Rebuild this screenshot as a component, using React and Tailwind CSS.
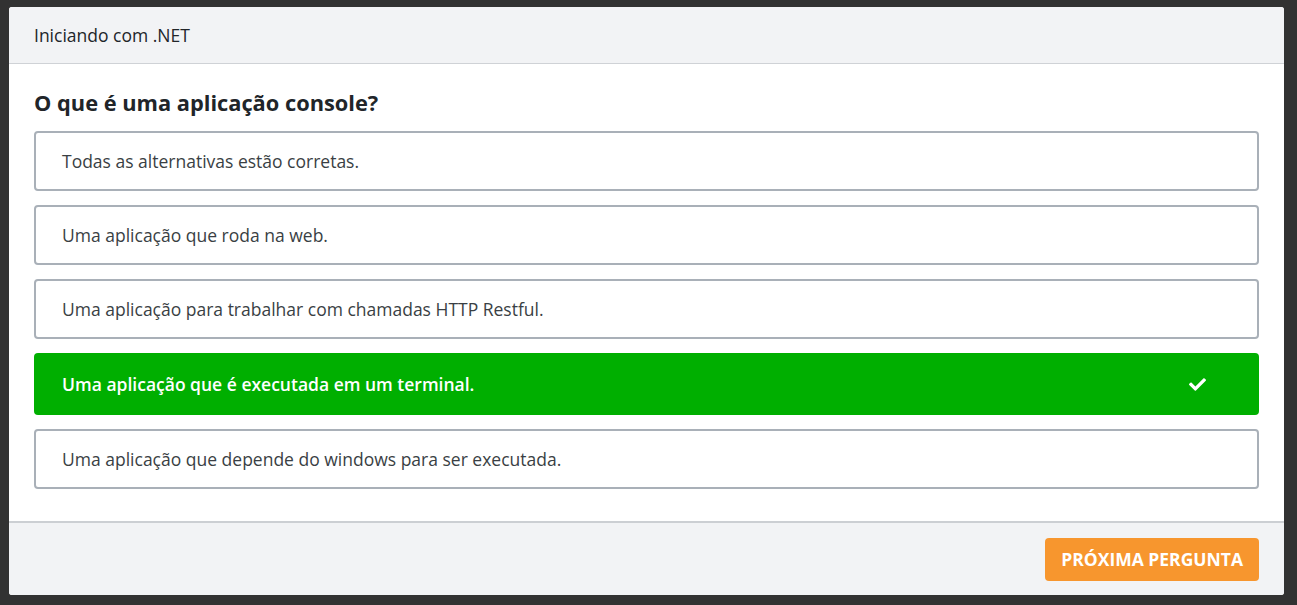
import { FaCheck } from 'react-icons/fa'

const options = [
  { text: 'Todas as alternativas estão corretas.' },
  { text: 'Uma aplicação que roda na web.' },
  { text: 'Uma aplicação para trabalhar com chamadas HTTP Restful.' },
  { text: 'Uma aplicação que é executada em um terminal.', correct: true },
  { text: 'Uma aplicação que depende do windows para ser executada.' },
]

export default function App() {
  return (
    <div className="min-h-[605px] bg-[#323232] pt-[7px] pl-[9px] pr-[13px] pb-[10px] font-['Open_Sans',sans-serif]">
      <div className="flex h-[588px] flex-col overflow-hidden rounded-[3px] bg-white">
        <div className="flex h-[57px] items-center border-b border-[#cfd2d6] bg-[#f2f3f5] px-[25px] text-[17.5px] text-[#212529]">
          Iniciando com .NET
        </div>

        <div className="flex-1 px-[25px] pt-[22px]">
          <h2 className="text-[21.8px] font-bold leading-[34px] text-[#212529]">O que é uma aplicação console?</h2>
          <div className="mt-[11px] flex flex-col gap-[14px]">
            {options.map((option) =>
              option.correct ? (
                <div
                  className="flex h-[62px] items-center justify-between rounded-[4px] bg-[#00af00] pl-[28px] pr-[53px] text-[17.5px] font-semibold text-white"
                  key={option.text}
                >
                  <span>{option.text}</span>
                  <FaCheck className="h-[17px] w-[17px]" />
                </div>
              ) : (
                <div
                  className="flex h-[60px] items-center rounded-[4px] border-2 border-[#a9b0b8] pl-[26px] text-[17.5px] text-[#3a3f44]"
                  key={option.text}
                >
                  {option.text}
                </div>
              ),
            )}
          </div>
        </div>

        <div className="flex h-[74px] items-center justify-end border-t-2 border-[#cccfd3] bg-[#f2f3f5] px-[25px]">
          <button
            className="h-[43px] rounded-[4px] bg-[#f7962e] px-[16px] text-[17.5px] font-bold uppercase text-white"
            type="button"
          >
            Próxima Pergunta
          </button>
        </div>
      </div>
    </div>
  )
}
